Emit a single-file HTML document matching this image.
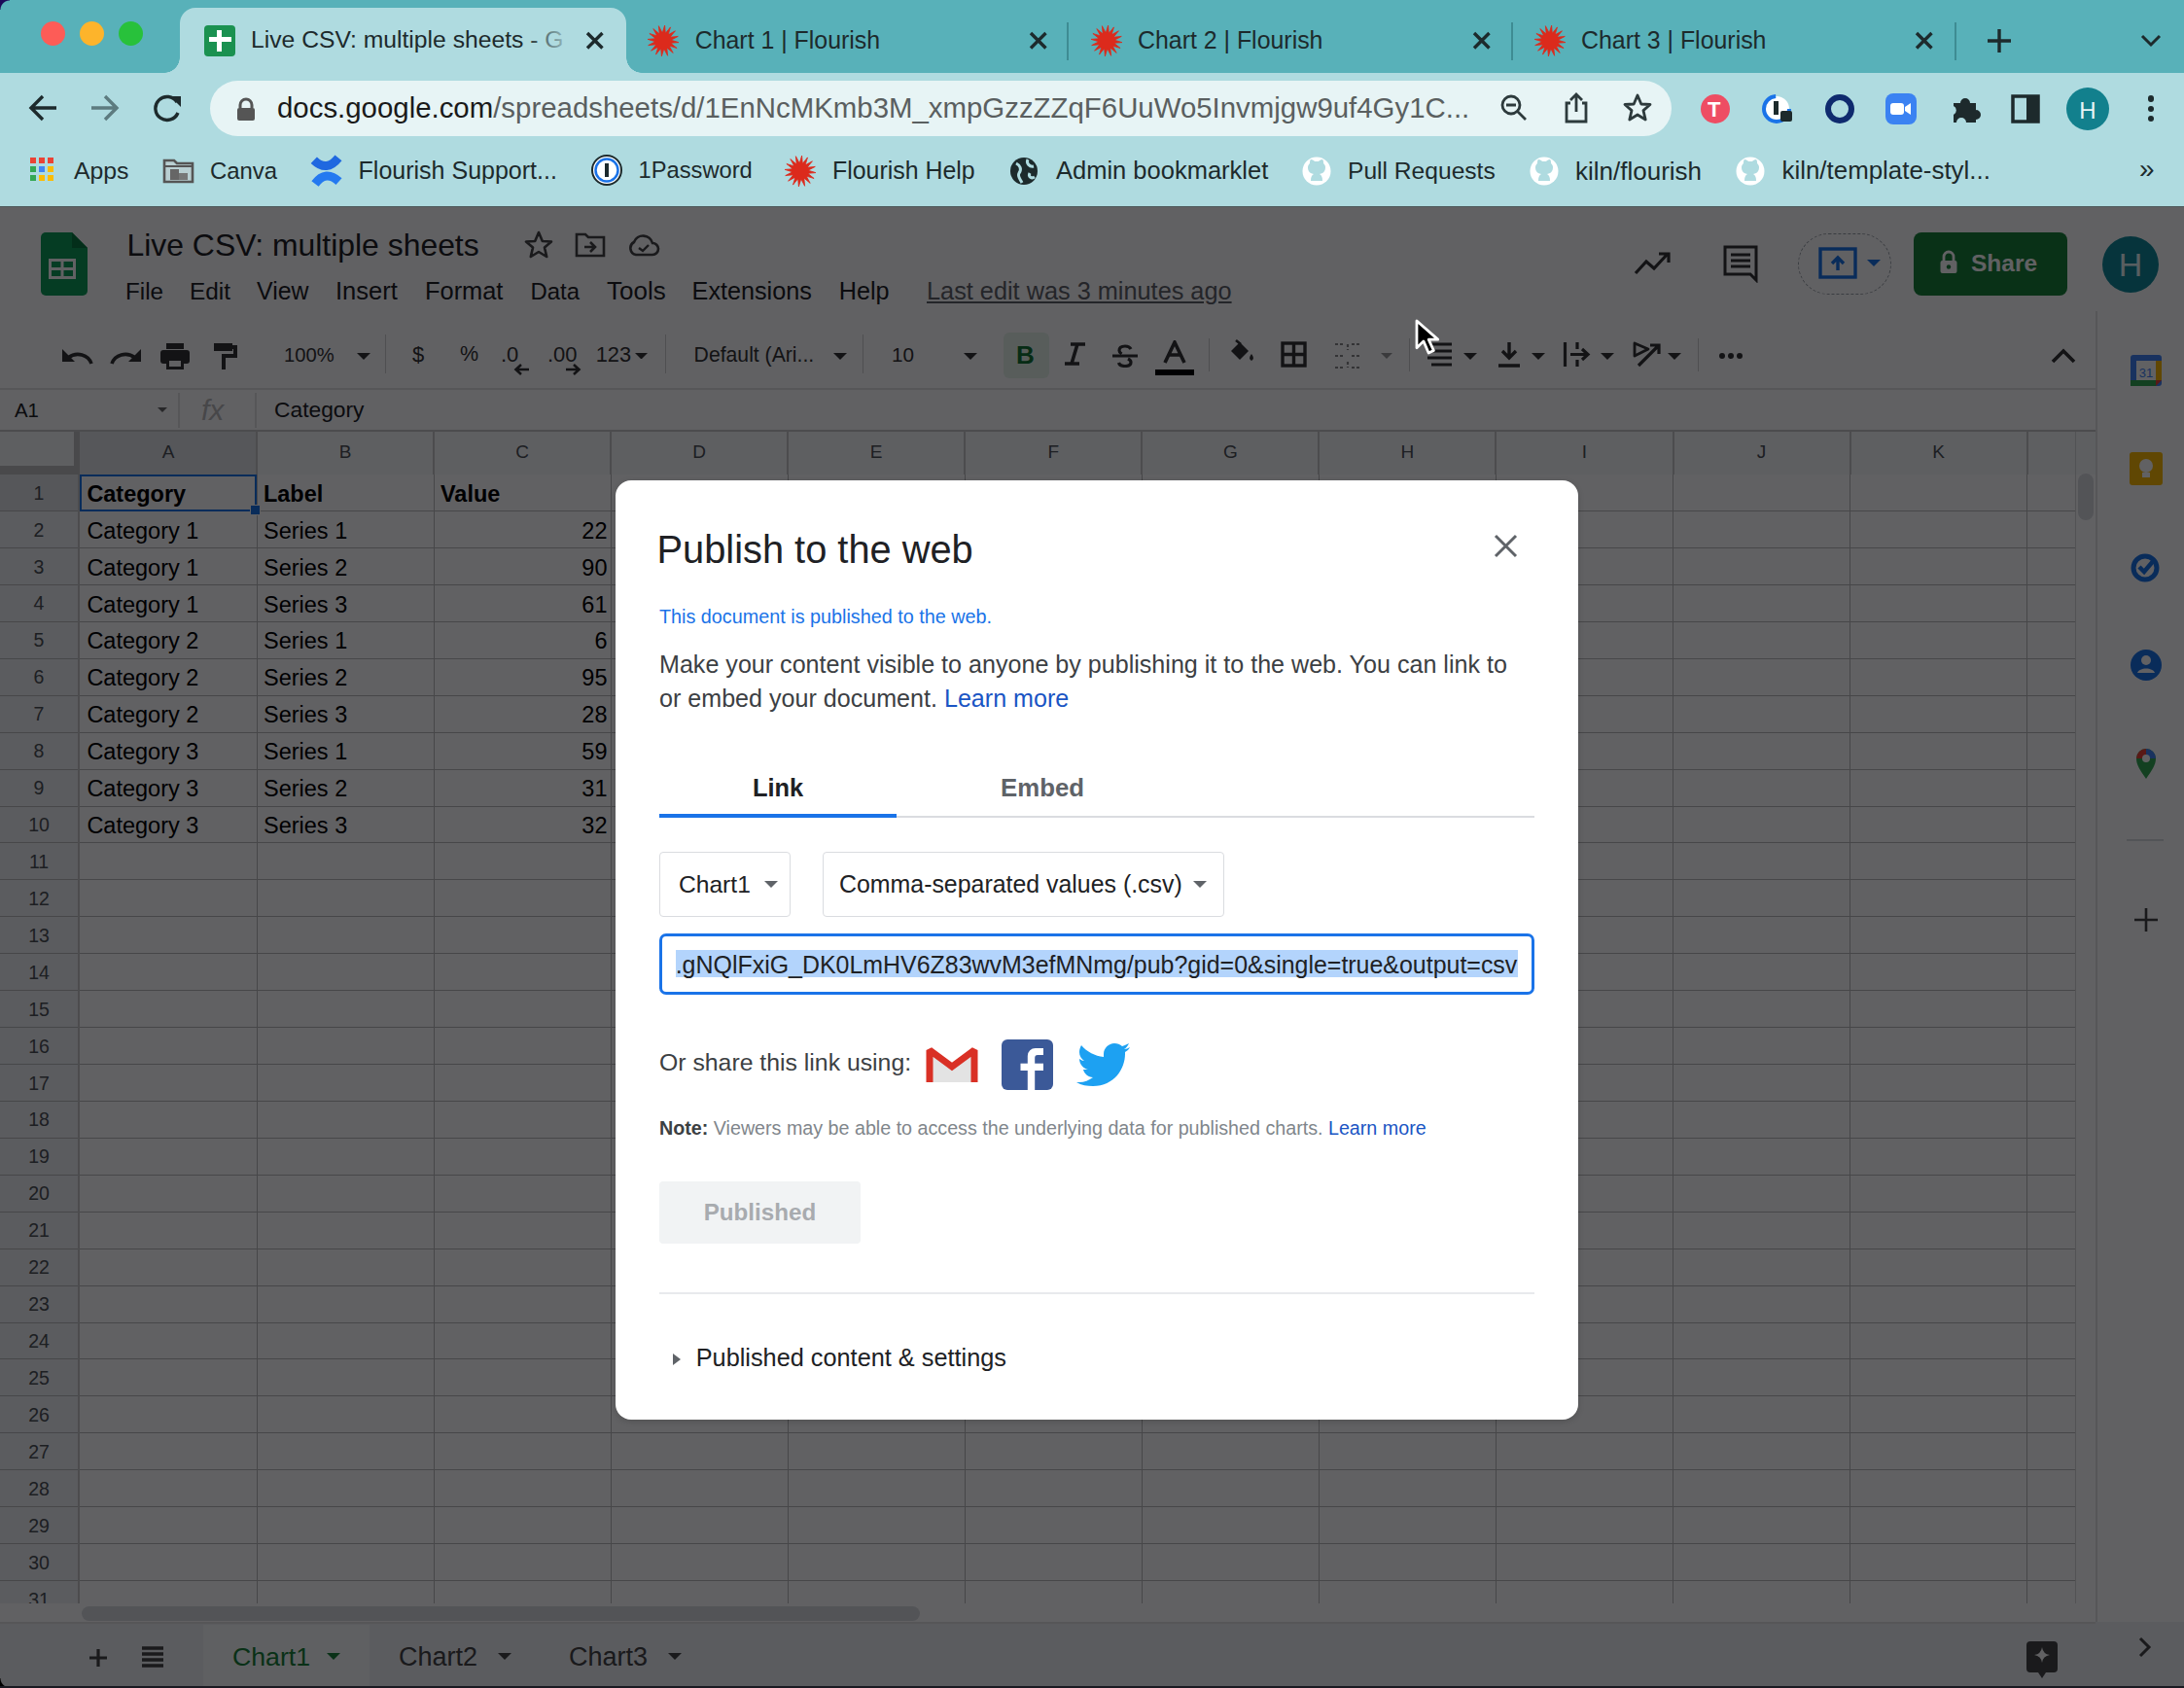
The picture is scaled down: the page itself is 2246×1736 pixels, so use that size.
<!DOCTYPE html><html><head><meta charset="utf-8"><style>
html,body{margin:0;padding:0;}
body{width:2246px;height:1736px;position:relative;overflow:hidden;background:#58b1b9;font-family:"Liberation Sans", sans-serif;}
.t{position:absolute;white-space:nowrap;line-height:1;}
.r{position:absolute;}
</style></head><body>
<div class="r" style="left:0.0px;top:75.0px;width:2246.0px;height:138.0px;background:#afdbe0;"></div>
<div class="r" style="left:0.0px;top:212.0px;width:2246.0px;height:1.0px;background:#4d5a5c;"></div>
<div class="r" style="left:0;top:0;width:10px;height:10px;background:radial-gradient(circle at 100% 100%, transparent 9px, #1c0a5a 10px)"></div>
<div class="r" style="left:41.5px;top:22px;width:25px;height:25px;border-radius:50%;background:#fd5c57"></div>
<div class="r" style="left:81.5px;top:22px;width:25px;height:25px;border-radius:50%;background:#fdb42b"></div>
<div class="r" style="left:121.5px;top:22px;width:25px;height:25px;border-radius:50%;background:#28c13b"></div>
<div class="r" style="left:185px;top:8px;width:459px;height:70px;background:#afdbe0;border-radius:16px 16px 0 0"></div>
<div class="r" style="left:169px;top:59px;width:16px;height:16px;background:radial-gradient(circle at 0 0, transparent 15.5px, #afdbe0 16px)"></div>
<div class="r" style="left:644px;top:59px;width:16px;height:16px;background:radial-gradient(circle at 100% 0, transparent 15.5px, #afdbe0 16px)"></div>
<div class="r" style="left:210px;top:26px;width:32px;height:32px;background:#1a9150;border-radius:4px"></div>
<div class="r" style="left:223.0px;top:31.0px;width:5.0px;height:22.0px;background:#fff;"></div>
<div class="r" style="left:215.0px;top:38.0px;width:23.0px;height:5.0px;background:#fff;"></div>
<div class="t" style="left:258.0px;top:29.1px;font-size:24.70px;color:#1d2a2c;font-weight:400;">Live CSV: multiple sheets - G</div>
<div class="r" style="left:540px;top:20px;width:60px;height:40px;background:linear-gradient(90deg, rgba(175,219,224,0), #afdbe0 85%)"></div>
<svg class="r" style="left:602.2px;top:32.2px;" width="19.5" height="19.5" viewBox="0 0 19.5 19.5"><path d="M2 2L17.5 17.5M17.5 2L2 17.5" stroke="#1d2a2c" stroke-width="3.4" stroke-linecap="butt"/></svg>
<svg class="r" style="left:664.0px;top:24.0px;" width="36" height="36" viewBox="0 0 36 36"><polygon points="33.9,19.6 25.7,20.3 32.1,25.5 24.2,23.1 28.2,30.4 21.8,25.1 22.6,33.3 18.8,26.0 16.4,33.9 15.7,25.7 10.5,32.1 12.9,24.2 5.6,28.2 10.9,21.8 2.7,22.6 10.0,18.8 2.1,16.4 10.3,15.7 3.9,10.5 11.8,12.9 7.8,5.6 14.2,10.9 13.4,2.7 17.2,10.0 19.6,2.1 20.3,10.3 25.5,3.9 23.1,11.8 30.4,7.8 25.1,14.2 33.3,13.4 26.0,17.2" fill="#dc2a1c" stroke="#dc2a1c" stroke-width="0.8" stroke-linejoin="round"/><circle cx="18" cy="18" r="8.8" fill="#dc2a1c"/></svg>
<div class="t" style="left:714.7px;top:28.9px;font-size:24.90px;color:#1d2a2c;font-weight:400;">Chart 1 | Flourish</div>
<svg class="r" style="left:1058.2px;top:32.2px;" width="19.5" height="19.5" viewBox="0 0 19.5 19.5"><path d="M2 2L17.5 17.5M17.5 2L2 17.5" stroke="#1d2a2c" stroke-width="3.4" stroke-linecap="butt"/></svg>
<svg class="r" style="left:1120.0px;top:24.0px;" width="36" height="36" viewBox="0 0 36 36"><polygon points="33.9,19.6 25.7,20.3 32.1,25.5 24.2,23.1 28.2,30.4 21.8,25.1 22.6,33.3 18.8,26.0 16.4,33.9 15.7,25.7 10.5,32.1 12.9,24.2 5.6,28.2 10.9,21.8 2.7,22.6 10.0,18.8 2.1,16.4 10.3,15.7 3.9,10.5 11.8,12.9 7.8,5.6 14.2,10.9 13.4,2.7 17.2,10.0 19.6,2.1 20.3,10.3 25.5,3.9 23.1,11.8 30.4,7.8 25.1,14.2 33.3,13.4 26.0,17.2" fill="#dc2a1c" stroke="#dc2a1c" stroke-width="0.8" stroke-linejoin="round"/><circle cx="18" cy="18" r="8.8" fill="#dc2a1c"/></svg>
<div class="t" style="left:1170.0px;top:28.9px;font-size:24.90px;color:#1d2a2c;font-weight:400;">Chart 2 | Flourish</div>
<svg class="r" style="left:1514.2px;top:32.2px;" width="19.5" height="19.5" viewBox="0 0 19.5 19.5"><path d="M2 2L17.5 17.5M17.5 2L2 17.5" stroke="#1d2a2c" stroke-width="3.4" stroke-linecap="butt"/></svg>
<svg class="r" style="left:1575.5px;top:24.0px;" width="36" height="36" viewBox="0 0 36 36"><polygon points="33.9,19.6 25.7,20.3 32.1,25.5 24.2,23.1 28.2,30.4 21.8,25.1 22.6,33.3 18.8,26.0 16.4,33.9 15.7,25.7 10.5,32.1 12.9,24.2 5.6,28.2 10.9,21.8 2.7,22.6 10.0,18.8 2.1,16.4 10.3,15.7 3.9,10.5 11.8,12.9 7.8,5.6 14.2,10.9 13.4,2.7 17.2,10.0 19.6,2.1 20.3,10.3 25.5,3.9 23.1,11.8 30.4,7.8 25.1,14.2 33.3,13.4 26.0,17.2" fill="#dc2a1c" stroke="#dc2a1c" stroke-width="0.8" stroke-linejoin="round"/><circle cx="18" cy="18" r="8.8" fill="#dc2a1c"/></svg>
<div class="t" style="left:1626.0px;top:28.9px;font-size:24.90px;color:#1d2a2c;font-weight:400;">Chart 3 | Flourish</div>
<svg class="r" style="left:1969.2px;top:32.2px;" width="19.5" height="19.5" viewBox="0 0 19.5 19.5"><path d="M2 2L17.5 17.5M17.5 2L2 17.5" stroke="#1d2a2c" stroke-width="3.4" stroke-linecap="butt"/></svg>
<div class="r" style="left:1097.0px;top:23.0px;width:2.0px;height:39.0px;background:#3e8c93;"></div>
<div class="r" style="left:1554.0px;top:23.0px;width:2.0px;height:39.0px;background:#3e8c93;"></div>
<div class="r" style="left:2010.0px;top:23.0px;width:2.0px;height:39.0px;background:#3e8c93;"></div>
<svg class="r" style="left:2042.0px;top:28.0px;" width="28" height="28" viewBox="0 0 28 28"><path d="M14 2V26M2 14H26" stroke="#1d2a2c" stroke-width="3.4"/></svg>
<svg class="r" style="left:2200.0px;top:34.0px;" width="24" height="16" viewBox="0 0 24 16"><path d="M3 3L12 12L21 3" stroke="#1d2a2c" stroke-width="3" fill="none"/></svg>
<svg class="r" style="left:28.0px;top:96.0px;" width="32" height="30" viewBox="0 0 32 30"><path d="M30 15H5M16 3L4 15L16 27" stroke="#1d2a2c" stroke-width="3.4" fill="none"/></svg>
<svg class="r" style="left:92.0px;top:96.0px;" width="32" height="30" viewBox="0 0 32 30"><path d="M2 15H27M16 3L28 15L16 27" stroke="#5d7b7f" stroke-width="3.4" fill="none"/></svg>
<svg class="r" style="left:155.0px;top:96.0px;" width="34" height="30" viewBox="0 0 34 30"><path d="M27 9A12 12 0 1 0 28 20" stroke="#1d2a2c" stroke-width="3.4" fill="none"/><path d="M20 3H31V14Z" fill="#1d2a2c"/></svg>
<div class="r" style="left:216px;top:83px;width:1503px;height:57px;border-radius:28.5px;background:#e7f4f5"></div>
<svg class="r" style="left:242.0px;top:100.0px;" width="22" height="26" viewBox="0 0 22 26"><path d="M5 11V8A6 6 0 0 1 17 8V11" stroke="#555" stroke-width="3" fill="none"/><rect x="2" y="11" width="18" height="13" rx="2" fill="#555"/></svg>
<div class="t" style="left:285.0px;top:96.1px;font-size:29.40px;color:#5a5f60;font-weight:400;"><span style="color:#1a1a1a">docs.google.com</span>/spreadsheets/d/1EnNcMKmb3M_xmpGzzZZqF6UuWo5Invmjgw9uf4Gy1C...</div>
<svg class="r" style="left:1543.0px;top:97.0px;" width="28" height="28" viewBox="0 0 28 28"><circle cx="11" cy="11" r="9" stroke="#2d3a3c" stroke-width="2.8" fill="none"/><path d="M17.5 17.5L26 26M6 11H16" stroke="#2d3a3c" stroke-width="2.8"/></svg>
<svg class="r" style="left:1607.0px;top:94.0px;" width="28" height="34" viewBox="0 0 28 34"><path d="M8 12H4V31H24V12H20M14 21V3M8 9L14 3L20 9" stroke="#2d3a3c" stroke-width="2.8" fill="none"/></svg>
<svg class="r" style="left:1668.0px;top:95.0px;" width="32" height="32" viewBox="0 0 32 32"><polygon points="16,3 19.8,12 29,12.5 22,18.6 24.2,28 16,23 7.8,28 10,18.6 3,12.5 12.2,12" stroke="#2d3a3c" stroke-width="2.8" fill="none" stroke-linejoin="round"/></svg>
<div class="r" style="left:1749px;top:97px;width:30px;height:30px;border-radius:50%;background:#ee4d63"></div>
<div class="t" style="left:1756.0px;top:102.4px;font-size:22.00px;color:#fff;font-weight:700;">T</div>
<svg class="r" style="left:1811.0px;top:96.0px;" width="34" height="34" viewBox="0 0 34 34"><circle cx="16" cy="16" r="13" stroke="#1a73e8" stroke-width="4" fill="#fff" stroke-dasharray="60 30"/><rect x="13" y="8" width="5" height="14" fill="#1d2a2c"/><rect x="20" y="18" width="12" height="11" rx="2" fill="#1d2a2c"/></svg>
<svg class="r" style="left:1876.0px;top:96.0px;" width="32" height="32" viewBox="0 0 32 32"><circle cx="16" cy="16" r="12" stroke="#0f2a6e" stroke-width="6" fill="none"/></svg>
<div class="r" style="left:1939px;top:96px;width:32px;height:32px;border-radius:8px;background:#3b82f2"></div>
<svg class="r" style="left:1943.0px;top:104.0px;" width="24" height="16" viewBox="0 0 24 16"><rect x="1" y="2" width="14" height="12" rx="3" fill="#fff"/><path d="M16 6L22 2V14L16 10Z" fill="#fff"/></svg>
<svg class="r" style="left:2006.0px;top:95.0px;" width="34" height="32" viewBox="0 0 34 32"><path d="M3 11H10A5 5 0 0 1 20 11H26V18A5 5 0 0 1 26 28V31H16A5 5 0 0 0 6 31H3V23A5 5 0 0 0 3 14Z" fill="#1d2a2c"/></svg>
<svg class="r" style="left:2068.0px;top:97.0px;" width="30" height="30" viewBox="0 0 30 30"><rect x="2" y="2" width="26" height="26" stroke="#1d2a2c" stroke-width="3.5" fill="none"/><rect x="16" y="2" width="12" height="26" fill="#1d2a2c"/></svg>
<div class="r" style="left:2125px;top:90px;width:44px;height:44px;border-radius:50%;background:#12808d"></div>
<div class="t" style="left:1847.0px;width:600px;text-align:center;top:101.7px;font-size:24.00px;color:#e6f4f5;font-weight:400;">H</div>
<div class="r" style="left:2208.7px;top:98.3px;width:6.4px;height:6.4px;border-radius:50%;background:#1d2a2c"></div>
<div class="r" style="left:2208.7px;top:108.6px;width:6.4px;height:6.4px;border-radius:50%;background:#1d2a2c"></div>
<div class="r" style="left:2208.7px;top:118.8px;width:6.4px;height:6.4px;border-radius:50%;background:#1d2a2c"></div>
<svg class="r" style="left:29.0px;top:160.0px;" width="28" height="28" viewBox="0 0 28 28"><rect x="2" y="2" width="6" height="6" fill="#ea4335"/><rect x="11" y="2" width="6" height="6" fill="#ea4335"/><rect x="20" y="2" width="6" height="6" fill="#ea4335"/><rect x="2" y="11" width="6" height="6" fill="#34a853"/><rect x="11" y="11" width="6" height="6" fill="#4285f4"/><rect x="20" y="11" width="6" height="6" fill="#fbbc04"/><rect x="2" y="20" width="6" height="6" fill="#34a853"/><rect x="11" y="20" width="6" height="6" fill="#fbbc04"/><rect x="20" y="20" width="6" height="6" fill="#fbbc04"/></svg>
<div class="t" style="left:76.0px;top:163.5px;font-size:24.80px;color:#1d2a2c;font-weight:400;">Apps</div>
<svg class="r" style="left:167.0px;top:162.0px;" width="34" height="27" viewBox="0 0 34 27"><path d="M2 3H12L15 6H31V25H2Z" stroke="#555" stroke-width="2.6" fill="#b9cfd2"/><path d="M2 9H31" stroke="#555" stroke-width="2"/><rect x="8" y="12" width="9" height="11" fill="#666"/><rect x="17" y="16" width="9" height="7" fill="#777"/></svg>
<div class="t" style="left:216.0px;top:164.3px;font-size:23.90px;color:#1d2a2c;font-weight:400;">Canva</div>
<svg class="r" style="left:310.0px;top:150.0px;" width="50" height="50" viewBox="0 0 50 50"><path d="M12.8 14.7Q26 27.5 38 12.4" stroke="#1f68e0" stroke-width="9" fill="none"/><path d="M14 39Q25 24.2 38.5 36.6" stroke="#2479f0" stroke-width="9" fill="none"/></svg>
<div class="t" style="left:368.6px;top:163.3px;font-size:25.00px;color:#1d2a2c;font-weight:400;">Flourish Support...</div>
<svg class="r" style="left:607.0px;top:158.0px;" width="34" height="34" viewBox="0 0 34 34"><circle cx="17" cy="17" r="15" fill="#fff" stroke="#1d2a2c" stroke-width="2"/><circle cx="17" cy="17" r="11.5" stroke="#1a73e8" stroke-width="2.5" fill="none"/><rect x="15" y="10" width="4" height="14" fill="#1d2a2c"/></svg>
<div class="t" style="left:656.6px;top:164.4px;font-size:23.70px;color:#1d2a2c;font-weight:400;">1Password</div>
<svg class="r" style="left:805.0px;top:158.0px;" width="36" height="36" viewBox="0 0 36 36"><polygon points="33.9,19.6 25.7,20.3 32.1,25.5 24.2,23.1 28.2,30.4 21.8,25.1 22.6,33.3 18.8,26.0 16.4,33.9 15.7,25.7 10.5,32.1 12.9,24.2 5.6,28.2 10.9,21.8 2.7,22.6 10.0,18.8 2.1,16.4 10.3,15.7 3.9,10.5 11.8,12.9 7.8,5.6 14.2,10.9 13.4,2.7 17.2,10.0 19.6,2.1 20.3,10.3 25.5,3.9 23.1,11.8 30.4,7.8 25.1,14.2 33.3,13.4 26.0,17.2" fill="#dc2a1c" stroke="#dc2a1c" stroke-width="0.8" stroke-linejoin="round"/><circle cx="18" cy="18" r="8.8" fill="#dc2a1c"/></svg>
<div class="t" style="left:856.0px;top:163.4px;font-size:24.90px;color:#1d2a2c;font-weight:400;">Flourish Help</div>
<svg class="r" style="left:1037.0px;top:160.0px;" width="32" height="32" viewBox="0 0 32 32"><circle cx="16" cy="16" r="14" fill="#1d2a2c"/><path d="M8 8C12 10 14 14 11 18C9 21 12 24 14 28M20 4C18 8 22 12 26 11M22 18C20 22 24 24 27 22" stroke="#afdbe0" stroke-width="3" fill="none"/></svg>
<div class="t" style="left:1086.0px;top:162.9px;font-size:25.50px;color:#1d2a2c;font-weight:400;">Admin bookmarklet</div>
<svg class="r" style="left:1338.0px;top:160.0px;" width="32" height="32" viewBox="0 0 32 32"><circle cx="16" cy="16" r="14.5" fill="#fff"/><path d="M10 26C10 22 11 20 13 19C8 18 7 15 7 12C7 10 8 9 9 8C9 6 9 5 10 4C12 4 13 5 14 6C15 6 17 6 18 6C19 5 20 4 22 4C23 5 23 6 23 8C24 9 25 10 25 12C25 15 24 18 19 19C21 20 22 22 22 26Z" fill="#afdbe0"/></svg>
<div class="t" style="left:1386.0px;top:163.7px;font-size:24.60px;color:#1d2a2c;font-weight:400;">Pull Requests</div>
<svg class="r" style="left:1572.0px;top:160.0px;" width="32" height="32" viewBox="0 0 32 32"><circle cx="16" cy="16" r="14.5" fill="#fff"/><path d="M10 26C10 22 11 20 13 19C8 18 7 15 7 12C7 10 8 9 9 8C9 6 9 5 10 4C12 4 13 5 14 6C15 6 17 6 18 6C19 5 20 4 22 4C23 5 23 6 23 8C24 9 25 10 25 12C25 15 24 18 19 19C21 20 22 22 22 26Z" fill="#afdbe0"/></svg>
<div class="t" style="left:1620.0px;top:162.5px;font-size:26.00px;color:#1d2a2c;font-weight:400;">kiln/flourish</div>
<svg class="r" style="left:1784.0px;top:160.0px;" width="32" height="32" viewBox="0 0 32 32"><circle cx="16" cy="16" r="14.5" fill="#fff"/><path d="M10 26C10 22 11 20 13 19C8 18 7 15 7 12C7 10 8 9 9 8C9 6 9 5 10 4C12 4 13 5 14 6C15 6 17 6 18 6C19 5 20 4 22 4C23 5 23 6 23 8C24 9 25 10 25 12C25 15 24 18 19 19C21 20 22 22 22 26Z" fill="#afdbe0"/></svg>
<div class="t" style="left:1832.5px;top:162.6px;font-size:25.90px;color:#1d2a2c;font-weight:400;">kiln/template-styl...</div>
<div class="t" style="left:2200.0px;top:159.8px;font-size:28.00px;color:#1d2a2c;font-weight:400;">»</div>
<div class="r" style="left:0;top:213px;width:2246px;height:1523px;background:#fff;overflow:hidden">
<div class="r" style="left:0;top:-213px;width:2246px;height:1736px">
<svg class="r" style="left:42.0px;top:239.0px;" width="48" height="65" viewBox="0 0 48 65"><path d="M0 5A5 5 0 0 1 5 0H32L48 16V60A5 5 0 0 1 43 65H5A5 5 0 0 1 0 60Z" fill="#0f9d58"/><path d="M32 0V16H48Z" fill="#0a7a40"/><rect x="8" y="27" width="28" height="21" fill="#fff"/><rect x="11" y="30" width="9.5" height="6" fill="#0f9d58"/><rect x="23.5" y="30" width="9.5" height="6" fill="#0f9d58"/><rect x="11" y="39" width="9.5" height="6" fill="#0f9d58"/><rect x="23.5" y="39" width="9.5" height="6" fill="#0f9d58"/></svg>
<div class="t" style="left:130.5px;top:237.0px;font-size:31.90px;color:#202124;font-weight:400;">Live CSV: multiple sheets</div>
<svg class="r" style="left:538.0px;top:237.0px;" width="32" height="30" viewBox="0 0 32 30"><polygon points="16,2 19.8,11 29,11.5 22,17.6 24.2,27 16,22 7.8,27 10,17.6 3,11.5 12.2,11" stroke="#444" stroke-width="2.6" fill="none" stroke-linejoin="round"/></svg>
<svg class="r" style="left:591.0px;top:238.0px;" width="32" height="28" viewBox="0 0 32 28"><path d="M2 3H11L14 6H30V25H2Z" stroke="#444" stroke-width="2.6" fill="none"/><path d="M10 16H20M16 11L21 16L16 21" stroke="#444" stroke-width="2.6" fill="none"/></svg>
<svg class="r" style="left:645.0px;top:238.0px;" width="34" height="28" viewBox="0 0 34 28"><path d="M9 24H26A6 6 0 0 0 26 12A10 10 0 0 0 7 11A7 7 0 0 0 9 24Z" stroke="#444" stroke-width="2.6" fill="none"/><path d="M12 17L16 20L22 14" stroke="#444" stroke-width="2.4" fill="none"/></svg>
<div class="t" style="left:129.0px;top:287.9px;font-size:24.20px;color:#202124;font-weight:400;">File</div>
<div class="t" style="left:195.0px;top:287.7px;font-size:24.40px;color:#202124;font-weight:400;">Edit</div>
<div class="t" style="left:264.0px;top:287.3px;font-size:24.90px;color:#202124;font-weight:400;">View</div>
<div class="t" style="left:345.0px;top:286.8px;font-size:25.50px;color:#202124;font-weight:400;">Insert</div>
<div class="t" style="left:437.0px;top:286.9px;font-size:25.40px;color:#202124;font-weight:400;">Format</div>
<div class="t" style="left:545.5px;top:288.2px;font-size:23.90px;color:#202124;font-weight:400;">Data</div>
<div class="t" style="left:624.0px;top:286.4px;font-size:26.00px;color:#202124;font-weight:400;">Tools</div>
<div class="t" style="left:711.6px;top:287.1px;font-size:25.20px;color:#202124;font-weight:400;">Extensions</div>
<div class="t" style="left:862.8px;top:287.1px;font-size:25.20px;color:#202124;font-weight:400;">Help</div>
<div class="t" style="left:953.0px;top:287.0px;font-size:25.30px;color:#5f6368;font-weight:400;text-decoration:underline;">Last edit was 3 minutes ago</div>
<svg class="r" style="left:1680.0px;top:256.0px;" width="40" height="28" viewBox="0 0 40 28"><path d="M2 25L13 13L21 20L35 5M26 5H36V14" stroke="#333" stroke-width="3.2" fill="none"/></svg>
<svg class="r" style="left:1771.0px;top:251.0px;" width="40" height="40" viewBox="0 0 40 40"><path d="M2 2H36V30L30 30L38 38V2" stroke="#333" stroke-width="0" fill="none"/><path d="M3 3H35V37L29 31H3Z" stroke="#333" stroke-width="3" fill="none"/><path d="M9 11H29M9 17H29M9 23H29" stroke="#333" stroke-width="3"/></svg>
<div class="r" style="left:1849px;top:240px;width:96px;height:63px;border-radius:32px;border:1.5px dashed #9aa0a6;box-sizing:border-box"></div>
<svg class="r" style="left:1869.0px;top:253.0px;" width="70" height="36" viewBox="0 0 70 36"><rect x="3" y="3" width="36" height="29" stroke="#1a73e8" stroke-width="3.4" fill="none"/><path d="M21 25V12M15 18L21 12L27 18" stroke="#1a73e8" stroke-width="3.4" fill="none"/><path d="M51 14H65L58 21Z" fill="#1a73e8"/></svg>
<div class="r" style="left:1968px;top:239px;width:158px;height:65px;border-radius:8px;background:#188038"></div>
<svg class="r" style="left:1994.0px;top:257.0px;" width="20" height="26" viewBox="0 0 20 26"><path d="M5 11V7A5 5 0 0 1 15 7V11" stroke="#fff" stroke-width="2.8" fill="none"/><rect x="1.5" y="11" width="17" height="13" rx="2" fill="#fff"/><circle cx="10" cy="17.5" r="2.2" fill="#188038"/></svg>
<div class="t" style="left:2027.0px;top:259.3px;font-size:24.50px;color:#fff;font-weight:700;">Share</div>
<div class="r" style="left:2162px;top:243px;width:58px;height:58px;border-radius:50%;background:#108a99"></div>
<div class="t" style="left:1891.0px;width:600px;text-align:center;top:255.2px;font-size:34.00px;color:#e6f6f8;font-weight:400;">H</div>
<svg class="r" style="left:62.0px;top:356.0px;" width="34" height="20" viewBox="0 0 34 20"><path d="M32 18C29 9 17 5 8 12" stroke="#333" stroke-width="3.6" fill="none"/><path d="M2 3V16H15Z" fill="#333"/></svg>
<svg class="r" style="left:113.0px;top:356.0px;" width="34" height="20" viewBox="0 0 34 20"><path d="M2 18C5 9 17 5 26 12" stroke="#333" stroke-width="3.6" fill="none"/><path d="M32 3V16H19Z" fill="#333"/></svg>
<svg class="r" style="left:164.0px;top:352.0px;" width="32" height="28" viewBox="0 0 32 28"><rect x="7" y="1" width="18" height="6" fill="#333"/><rect x="1" y="8" width="30" height="14" rx="3" fill="#333"/><rect x="8.5" y="17.5" width="15" height="9" fill="#fff" stroke="#333" stroke-width="3"/></svg>
<svg class="r" style="left:219.0px;top:352.0px;" width="26" height="28" viewBox="0 0 26 28"><rect x="1" y="1" width="19" height="8" fill="#333"/><path d="M20 5H23V14H11V28" stroke="#333" stroke-width="4" fill="none"/></svg>
<div class="t" style="left:292.0px;top:355.2px;font-size:20.20px;color:#333;font-weight:400;">100%</div>
<svg class="r" style="left:367.0px;top:362.5px;" width="14" height="7.0" viewBox="0 0 14 7.0"><path d="M0 0H14L7.0 7.0Z" fill="#333"/></svg>
<div class="r" style="left:396.0px;top:344.0px;width:1.0px;height:40.0px;background:#d0d0d0;"></div>
<div class="t" style="left:424.0px;top:354.4px;font-size:22.00px;color:#333;font-weight:400;">$</div>
<div class="t" style="left:473.0px;top:354.1px;font-size:21.50px;color:#333;font-weight:400;">%</div>
<div class="t" style="left:515.0px;top:353.7px;font-size:22.00px;color:#333;font-weight:400;">.0</div>
<svg class="r" style="left:528.0px;top:374.0px;" width="17" height="12" viewBox="0 0 17 12"><path d="M16 6H3M8 1L2.5 6L8 11" stroke="#333" stroke-width="2.6" fill="none"/></svg>
<div class="t" style="left:563.0px;top:353.7px;font-size:22.00px;color:#333;font-weight:400;">.00</div>
<svg class="r" style="left:581.0px;top:374.0px;" width="17" height="12" viewBox="0 0 17 12"><path d="M1 6H14M9 1L14.5 6L9 11" stroke="#333" stroke-width="2.6" fill="none"/></svg>
<div class="t" style="left:612.7px;top:353.8px;font-size:21.80px;color:#333;font-weight:400;">123</div>
<svg class="r" style="left:652.5px;top:362.8px;" width="13" height="6.5" viewBox="0 0 13 6.5"><path d="M0 0H13L6.5 6.5Z" fill="#333"/></svg>
<div class="r" style="left:684.0px;top:344.0px;width:1.0px;height:40.0px;background:#d0d0d0;"></div>
<div class="t" style="left:713.6px;top:354.4px;font-size:21.20px;color:#333;font-weight:400;">Default (Ari...</div>
<svg class="r" style="left:857.0px;top:362.5px;" width="14" height="7.0" viewBox="0 0 14 7.0"><path d="M0 0H14L7.0 7.0Z" fill="#333"/></svg>
<div class="r" style="left:887.0px;top:344.0px;width:1.0px;height:40.0px;background:#d0d0d0;"></div>
<div class="t" style="left:917.0px;top:354.8px;font-size:20.70px;color:#333;font-weight:400;">10</div>
<svg class="r" style="left:991.0px;top:362.5px;" width="14" height="7.0" viewBox="0 0 14 7.0"><path d="M0 0H14L7.0 7.0Z" fill="#333"/></svg>
<div class="r" style="left:1032px;top:342px;width:47px;height:47px;border-radius:6px;background:#e6f4ea"></div>
<div class="t" style="left:1045.0px;top:352.0px;font-size:26.00px;color:#137333;font-weight:700;">B</div>
<svg class="r" style="left:1092.0px;top:352.0px;" width="26" height="24" viewBox="0 0 26 24"><path d="M9 2H24M3 22H18M16 2L10 22" stroke="#333" stroke-width="3.6" fill="none"/></svg>
<svg class="r" style="left:1143.0px;top:354.0px;" width="28" height="24" viewBox="0 0 28 24"><path d="M1 12H27" stroke="#333" stroke-width="3"/><path d="M20 5C19 3 17 2 14 2C10 2 8 4 8 6.5C8 8 9 9 10.5 10M17 15C19 16 20 17 20 18.5C20 21 17.5 22.5 14 22.5C10 22.5 8 21 7.5 19" stroke="#333" stroke-width="3.2" fill="none"/></svg>
<svg class="r" style="left:1196.0px;top:350.0px;" width="24" height="24" viewBox="0 0 24 24"><path d="M2 23L12 2L22 23M6 15H18" stroke="#333" stroke-width="3.6" fill="none"/></svg>
<div class="r" style="left:1188.0px;top:379.6px;width:39.5px;height:6.7px;background:#000;"></div>
<div class="r" style="left:1243.0px;top:348.0px;width:1.0px;height:34.0px;background:#d0d0d0;"></div>
<svg class="r" style="left:1263.0px;top:348.0px;" width="28" height="26" viewBox="0 0 28 26"><path d="M3 13L12 4L21 13L12 22Z" fill="#333"/><path d="M3 13H21" stroke="#fff" stroke-width="0"/><path d="M8 2L13 6" stroke="#333" stroke-width="2.6"/><path d="M24 16C26 19 27 21 24 23C21 21 22 19 24 16Z" fill="#333"/></svg>
<svg class="r" style="left:1317.0px;top:351.0px;" width="27" height="27" viewBox="0 0 27 27"><rect x="2" y="2" width="23" height="23" stroke="#333" stroke-width="3.4" fill="none"/><path d="M13.5 2V25M2 13.5H25" stroke="#333" stroke-width="3.4"/></svg>
<svg class="r" style="left:1371.0px;top:352.0px;" width="31" height="28" viewBox="0 0 31 28"><path d="M2 2H11M19 2H29M2 26H11M19 26H29M2 14H11M19 14H29M15 2V8M15 20V26" stroke="#8a8a8a" stroke-width="2.2" fill="none" stroke-dasharray="3 2"/></svg>
<svg class="r" style="left:1420.0px;top:363.0px;" width="12" height="6.0" viewBox="0 0 12 6.0"><path d="M0 0H12L6.0 6.0Z" fill="#9a9a9a"/></svg>
<div class="r" style="left:1449.0px;top:348.0px;width:1.0px;height:34.0px;background:#d0d0d0;"></div>
<svg class="r" style="left:1466.0px;top:352.0px;" width="28" height="26" viewBox="0 0 28 26"><path d="M2 2H27M6 9H27M2 16H27M6 23H27" stroke="#333" stroke-width="3.2"/></svg>
<svg class="r" style="left:1505.0px;top:362.5px;" width="14" height="7.0" viewBox="0 0 14 7.0"><path d="M0 0H14L7.0 7.0Z" fill="#333"/></svg>
<svg class="r" style="left:1540.0px;top:351.0px;" width="24" height="27" viewBox="0 0 24 27"><path d="M12 1V17M5 10L12 17L19 10M1 25H23" stroke="#333" stroke-width="3.4" fill="none"/></svg>
<svg class="r" style="left:1575.0px;top:362.5px;" width="14" height="7.0" viewBox="0 0 14 7.0"><path d="M0 0H14L7.0 7.0Z" fill="#333"/></svg>
<svg class="r" style="left:1607.0px;top:351.0px;" width="29" height="27" viewBox="0 0 29 27"><path d="M2.5 1V26M15 1V8M15 19V26M8 13.5H26M20 8L26 13.5L20 19" stroke="#333" stroke-width="3.2" fill="none"/></svg>
<svg class="r" style="left:1646.0px;top:362.5px;" width="14" height="7.0" viewBox="0 0 14 7.0"><path d="M0 0H14L7.0 7.0Z" fill="#333"/></svg>
<svg class="r" style="left:1678.0px;top:350.0px;" width="30" height="28" viewBox="0 0 30 28"><path d="M3 3L17 9L3 16Z" stroke="#333" stroke-width="2.8" fill="none" stroke-linejoin="round"/><path d="M7 26L27 6M19 5H28V14" stroke="#333" stroke-width="3.2" fill="none"/></svg>
<svg class="r" style="left:1715.0px;top:362.5px;" width="14" height="7.0" viewBox="0 0 14 7.0"><path d="M0 0H14L7.0 7.0Z" fill="#333"/></svg>
<div class="r" style="left:1746.0px;top:348.0px;width:1.0px;height:34.0px;background:#d0d0d0;"></div>
<div class="r" style="left:1768px;top:362.5px;width:6px;height:6px;border-radius:50%;background:#333"></div>
<div class="r" style="left:1777px;top:362.5px;width:6px;height:6px;border-radius:50%;background:#333"></div>
<div class="r" style="left:1786px;top:362.5px;width:6px;height:6px;border-radius:50%;background:#333"></div>
<svg class="r" style="left:2108.0px;top:357.0px;" width="28" height="18" viewBox="0 0 28 18"><path d="M3 15L14 4L25 15" stroke="#333" stroke-width="3.6" fill="none"/></svg>
<div class="r" style="left:0.0px;top:399.0px;width:2155.0px;height:2.0px;background:#e1e3e1;"></div>
<div class="t" style="left:15.0px;top:411.7px;font-size:20.40px;color:#202124;font-weight:400;">A1</div>
<svg class="r" style="left:162.0px;top:418.5px;" width="10" height="5.0" viewBox="0 0 10 5.0"><path d="M0 0H10L5.0 5.0Z" fill="#666"/></svg>
<div class="r" style="left:183.0px;top:404.0px;width:2.0px;height:36.0px;background:#e1e3e1;"></div>
<div class="t" style="left:207.0px;top:406.6px;font-size:30.00px;color:#bbb;font-weight:400;"><i>fx</i></div>
<div class="r" style="left:262.0px;top:404.0px;width:2.0px;height:36.0px;background:#e1e3e1;"></div>
<div class="t" style="left:282.0px;top:409.7px;font-size:22.80px;color:#202124;font-weight:400;">Category</div>
<div class="r" style="left:0.0px;top:442.0px;width:2155.0px;height:2.0px;background:#c7c7c7;"></div>
<div class="r" style="left:0.0px;top:444.0px;width:2155.0px;height:43.6px;background:#f8f9fa;"></div>
<div class="r" style="left:82.0px;top:444.0px;width:182.1px;height:43.6px;background:#e3e5e8;"></div>
<div class="t" style="left:-127.0px;width:600px;text-align:center;top:454.9px;font-size:19.00px;color:#4d5156;font-weight:400;">A</div>
<div class="t" style="left:55.1px;width:600px;text-align:center;top:454.9px;font-size:19.00px;color:#4d5156;font-weight:400;">B</div>
<div class="t" style="left:237.1px;width:600px;text-align:center;top:454.9px;font-size:19.00px;color:#4d5156;font-weight:400;">C</div>
<div class="t" style="left:419.2px;width:600px;text-align:center;top:454.9px;font-size:19.00px;color:#4d5156;font-weight:400;">D</div>
<div class="t" style="left:601.2px;width:600px;text-align:center;top:454.9px;font-size:19.00px;color:#4d5156;font-weight:400;">E</div>
<div class="t" style="left:783.3px;width:600px;text-align:center;top:454.9px;font-size:19.00px;color:#4d5156;font-weight:400;">F</div>
<div class="t" style="left:965.3px;width:600px;text-align:center;top:454.9px;font-size:19.00px;color:#4d5156;font-weight:400;">G</div>
<div class="t" style="left:1147.4px;width:600px;text-align:center;top:454.9px;font-size:19.00px;color:#4d5156;font-weight:400;">H</div>
<div class="t" style="left:1329.4px;width:600px;text-align:center;top:454.9px;font-size:19.00px;color:#4d5156;font-weight:400;">I</div>
<div class="t" style="left:1511.5px;width:600px;text-align:center;top:454.9px;font-size:19.00px;color:#4d5156;font-weight:400;">J</div>
<div class="t" style="left:1693.5px;width:600px;text-align:center;top:454.9px;font-size:19.00px;color:#4d5156;font-weight:400;">K</div>
<div class="r" style="left:263.1px;top:444.0px;width:2.0px;height:43.6px;background:#c7c7c7;"></div>
<div class="r" style="left:445.1px;top:444.0px;width:2.0px;height:43.6px;background:#c7c7c7;"></div>
<div class="r" style="left:627.2px;top:444.0px;width:2.0px;height:43.6px;background:#c7c7c7;"></div>
<div class="r" style="left:809.2px;top:444.0px;width:2.0px;height:43.6px;background:#c7c7c7;"></div>
<div class="r" style="left:991.2px;top:444.0px;width:2.0px;height:43.6px;background:#c7c7c7;"></div>
<div class="r" style="left:1173.3px;top:444.0px;width:2.0px;height:43.6px;background:#c7c7c7;"></div>
<div class="r" style="left:1355.4px;top:444.0px;width:2.0px;height:43.6px;background:#c7c7c7;"></div>
<div class="r" style="left:1537.4px;top:444.0px;width:2.0px;height:43.6px;background:#c7c7c7;"></div>
<div class="r" style="left:1719.5px;top:444.0px;width:2.0px;height:43.6px;background:#c7c7c7;"></div>
<div class="r" style="left:1901.5px;top:444.0px;width:2.0px;height:43.6px;background:#c7c7c7;"></div>
<div class="r" style="left:2083.6px;top:444.0px;width:2.0px;height:43.6px;background:#c7c7c7;"></div>
<div class="r" style="left:0.0px;top:487.6px;width:82.0px;height:1161.4px;background:#eff1f3;"></div>
<div class="r" style="left:0.0px;top:487.6px;width:82.0px;height:37.9px;background:#e3e5e8;"></div>
<div class="r" style="left:0.0px;top:525.0px;width:2134.0px;height:1.0px;background:#bcbcbc;"></div>
<div class="r" style="left:0.0px;top:563.0px;width:2134.0px;height:1.0px;background:#bcbcbc;"></div>
<div class="r" style="left:0.0px;top:600.9px;width:2134.0px;height:1.0px;background:#bcbcbc;"></div>
<div class="r" style="left:0.0px;top:638.8px;width:2134.0px;height:1.0px;background:#bcbcbc;"></div>
<div class="r" style="left:0.0px;top:676.8px;width:2134.0px;height:1.0px;background:#bcbcbc;"></div>
<div class="r" style="left:0.0px;top:714.7px;width:2134.0px;height:1.0px;background:#bcbcbc;"></div>
<div class="r" style="left:0.0px;top:752.6px;width:2134.0px;height:1.0px;background:#bcbcbc;"></div>
<div class="r" style="left:0.0px;top:790.5px;width:2134.0px;height:1.0px;background:#bcbcbc;"></div>
<div class="r" style="left:0.0px;top:828.5px;width:2134.0px;height:1.0px;background:#bcbcbc;"></div>
<div class="r" style="left:0.0px;top:866.4px;width:2134.0px;height:1.0px;background:#bcbcbc;"></div>
<div class="r" style="left:0.0px;top:904.3px;width:2134.0px;height:1.0px;background:#bcbcbc;"></div>
<div class="r" style="left:0.0px;top:942.3px;width:2134.0px;height:1.0px;background:#bcbcbc;"></div>
<div class="r" style="left:0.0px;top:980.2px;width:2134.0px;height:1.0px;background:#bcbcbc;"></div>
<div class="r" style="left:0.0px;top:1018.1px;width:2134.0px;height:1.0px;background:#bcbcbc;"></div>
<div class="r" style="left:0.0px;top:1056.0px;width:2134.0px;height:1.0px;background:#bcbcbc;"></div>
<div class="r" style="left:0.0px;top:1094.0px;width:2134.0px;height:1.0px;background:#bcbcbc;"></div>
<div class="r" style="left:0.0px;top:1131.9px;width:2134.0px;height:1.0px;background:#bcbcbc;"></div>
<div class="r" style="left:0.0px;top:1169.8px;width:2134.0px;height:1.0px;background:#bcbcbc;"></div>
<div class="r" style="left:0.0px;top:1207.8px;width:2134.0px;height:1.0px;background:#bcbcbc;"></div>
<div class="r" style="left:0.0px;top:1245.7px;width:2134.0px;height:1.0px;background:#bcbcbc;"></div>
<div class="r" style="left:0.0px;top:1283.6px;width:2134.0px;height:1.0px;background:#bcbcbc;"></div>
<div class="r" style="left:0.0px;top:1321.6px;width:2134.0px;height:1.0px;background:#bcbcbc;"></div>
<div class="r" style="left:0.0px;top:1359.5px;width:2134.0px;height:1.0px;background:#bcbcbc;"></div>
<div class="r" style="left:0.0px;top:1397.4px;width:2134.0px;height:1.0px;background:#bcbcbc;"></div>
<div class="r" style="left:0.0px;top:1435.4px;width:2134.0px;height:1.0px;background:#bcbcbc;"></div>
<div class="r" style="left:0.0px;top:1473.3px;width:2134.0px;height:1.0px;background:#bcbcbc;"></div>
<div class="r" style="left:0.0px;top:1511.2px;width:2134.0px;height:1.0px;background:#bcbcbc;"></div>
<div class="r" style="left:0.0px;top:1549.1px;width:2134.0px;height:1.0px;background:#bcbcbc;"></div>
<div class="r" style="left:0.0px;top:1587.1px;width:2134.0px;height:1.0px;background:#bcbcbc;"></div>
<div class="r" style="left:0.0px;top:1625.0px;width:2134.0px;height:1.0px;background:#bcbcbc;"></div>
<div class="r" style="left:0.0px;top:1662.9px;width:2134.0px;height:1.0px;background:#bcbcbc;"></div>
<div class="r" style="left:263.6px;top:487.6px;width:1.0px;height:1161.4px;background:#bcbcbc;"></div>
<div class="r" style="left:445.6px;top:487.6px;width:1.0px;height:1161.4px;background:#bcbcbc;"></div>
<div class="r" style="left:627.7px;top:487.6px;width:1.0px;height:1161.4px;background:#bcbcbc;"></div>
<div class="r" style="left:809.7px;top:487.6px;width:1.0px;height:1161.4px;background:#bcbcbc;"></div>
<div class="r" style="left:991.8px;top:487.6px;width:1.0px;height:1161.4px;background:#bcbcbc;"></div>
<div class="r" style="left:1173.8px;top:487.6px;width:1.0px;height:1161.4px;background:#bcbcbc;"></div>
<div class="r" style="left:1355.9px;top:487.6px;width:1.0px;height:1161.4px;background:#bcbcbc;"></div>
<div class="r" style="left:1537.9px;top:487.6px;width:1.0px;height:1161.4px;background:#bcbcbc;"></div>
<div class="r" style="left:1720.0px;top:487.6px;width:1.0px;height:1161.4px;background:#bcbcbc;"></div>
<div class="r" style="left:1902.0px;top:487.6px;width:1.0px;height:1161.4px;background:#bcbcbc;"></div>
<div class="r" style="left:2084.1px;top:487.6px;width:1.0px;height:1161.4px;background:#bcbcbc;"></div>
<div class="r" style="left:80.0px;top:444.0px;width:2.0px;height:1205.0px;background:#c7c7c7;"></div>
<div class="r" style="left:76.0px;top:444.0px;width:6.0px;height:43.6px;background:#c0c0c0;"></div>
<div class="r" style="left:0.0px;top:479.0px;width:82.0px;height:8.6px;background:#c0c0c0;"></div>
<div class="t" style="left:-260.0px;width:600px;text-align:center;top:497.6px;font-size:19.50px;color:#4d5156;font-weight:400;">1</div>
<div class="t" style="left:-260.0px;width:600px;text-align:center;top:535.5px;font-size:19.50px;color:#4d5156;font-weight:400;">2</div>
<div class="t" style="left:-260.0px;width:600px;text-align:center;top:573.5px;font-size:19.50px;color:#4d5156;font-weight:400;">3</div>
<div class="t" style="left:-260.0px;width:600px;text-align:center;top:611.4px;font-size:19.50px;color:#4d5156;font-weight:400;">4</div>
<div class="t" style="left:-260.0px;width:600px;text-align:center;top:649.3px;font-size:19.50px;color:#4d5156;font-weight:400;">5</div>
<div class="t" style="left:-260.0px;width:600px;text-align:center;top:687.2px;font-size:19.50px;color:#4d5156;font-weight:400;">6</div>
<div class="t" style="left:-260.0px;width:600px;text-align:center;top:725.2px;font-size:19.50px;color:#4d5156;font-weight:400;">7</div>
<div class="t" style="left:-260.0px;width:600px;text-align:center;top:763.1px;font-size:19.50px;color:#4d5156;font-weight:400;">8</div>
<div class="t" style="left:-260.0px;width:600px;text-align:center;top:801.0px;font-size:19.50px;color:#4d5156;font-weight:400;">9</div>
<div class="t" style="left:-260.0px;width:600px;text-align:center;top:839.0px;font-size:19.50px;color:#4d5156;font-weight:400;">10</div>
<div class="t" style="left:-260.0px;width:600px;text-align:center;top:876.9px;font-size:19.50px;color:#4d5156;font-weight:400;">11</div>
<div class="t" style="left:-260.0px;width:600px;text-align:center;top:914.8px;font-size:19.50px;color:#4d5156;font-weight:400;">12</div>
<div class="t" style="left:-260.0px;width:600px;text-align:center;top:952.8px;font-size:19.50px;color:#4d5156;font-weight:400;">13</div>
<div class="t" style="left:-260.0px;width:600px;text-align:center;top:990.7px;font-size:19.50px;color:#4d5156;font-weight:400;">14</div>
<div class="t" style="left:-260.0px;width:600px;text-align:center;top:1028.6px;font-size:19.50px;color:#4d5156;font-weight:400;">15</div>
<div class="t" style="left:-260.0px;width:600px;text-align:center;top:1066.5px;font-size:19.50px;color:#4d5156;font-weight:400;">16</div>
<div class="t" style="left:-260.0px;width:600px;text-align:center;top:1104.5px;font-size:19.50px;color:#4d5156;font-weight:400;">17</div>
<div class="t" style="left:-260.0px;width:600px;text-align:center;top:1142.4px;font-size:19.50px;color:#4d5156;font-weight:400;">18</div>
<div class="t" style="left:-260.0px;width:600px;text-align:center;top:1180.3px;font-size:19.50px;color:#4d5156;font-weight:400;">19</div>
<div class="t" style="left:-260.0px;width:600px;text-align:center;top:1218.3px;font-size:19.50px;color:#4d5156;font-weight:400;">20</div>
<div class="t" style="left:-260.0px;width:600px;text-align:center;top:1256.2px;font-size:19.50px;color:#4d5156;font-weight:400;">21</div>
<div class="t" style="left:-260.0px;width:600px;text-align:center;top:1294.1px;font-size:19.50px;color:#4d5156;font-weight:400;">22</div>
<div class="t" style="left:-260.0px;width:600px;text-align:center;top:1332.1px;font-size:19.50px;color:#4d5156;font-weight:400;">23</div>
<div class="t" style="left:-260.0px;width:600px;text-align:center;top:1370.0px;font-size:19.50px;color:#4d5156;font-weight:400;">24</div>
<div class="t" style="left:-260.0px;width:600px;text-align:center;top:1407.9px;font-size:19.50px;color:#4d5156;font-weight:400;">25</div>
<div class="t" style="left:-260.0px;width:600px;text-align:center;top:1445.8px;font-size:19.50px;color:#4d5156;font-weight:400;">26</div>
<div class="t" style="left:-260.0px;width:600px;text-align:center;top:1483.8px;font-size:19.50px;color:#4d5156;font-weight:400;">27</div>
<div class="t" style="left:-260.0px;width:600px;text-align:center;top:1521.7px;font-size:19.50px;color:#4d5156;font-weight:400;">28</div>
<div class="t" style="left:-260.0px;width:600px;text-align:center;top:1559.6px;font-size:19.50px;color:#4d5156;font-weight:400;">29</div>
<div class="t" style="left:-260.0px;width:600px;text-align:center;top:1597.6px;font-size:19.50px;color:#4d5156;font-weight:400;">30</div>
<div class="t" style="left:-260.0px;width:600px;text-align:center;top:1635.5px;font-size:19.50px;color:#4d5156;font-weight:400;">31</div>
<div class="t" style="left:89.4px;top:496.7px;font-size:23.46px;color:#000;font-weight:700;">Category</div>
<div class="t" style="left:271.0px;top:496.7px;font-size:23.46px;color:#000;font-weight:700;">Label</div>
<div class="t" style="left:453.0px;top:496.7px;font-size:23.46px;color:#000;font-weight:700;">Value</div>
<div class="t" style="left:89.4px;top:534.6px;font-size:23.50px;color:#000;font-weight:400;">Category 1</div>
<div class="t" style="left:271.0px;top:534.6px;font-size:23.50px;color:#000;font-weight:400;">Series 1</div>
<div class="t" style="left:24.5px;width:600px;text-align:right;top:534.6px;font-size:23.50px;color:#000;font-weight:400;">22</div>
<div class="t" style="left:89.4px;top:572.6px;font-size:23.50px;color:#000;font-weight:400;">Category 1</div>
<div class="t" style="left:271.0px;top:572.6px;font-size:23.50px;color:#000;font-weight:400;">Series 2</div>
<div class="t" style="left:24.5px;width:600px;text-align:right;top:572.6px;font-size:23.50px;color:#000;font-weight:400;">90</div>
<div class="t" style="left:89.4px;top:610.5px;font-size:23.50px;color:#000;font-weight:400;">Category 1</div>
<div class="t" style="left:271.0px;top:610.5px;font-size:23.50px;color:#000;font-weight:400;">Series 3</div>
<div class="t" style="left:24.5px;width:600px;text-align:right;top:610.5px;font-size:23.50px;color:#000;font-weight:400;">61</div>
<div class="t" style="left:89.4px;top:648.4px;font-size:23.50px;color:#000;font-weight:400;">Category 2</div>
<div class="t" style="left:271.0px;top:648.4px;font-size:23.50px;color:#000;font-weight:400;">Series 1</div>
<div class="t" style="left:24.5px;width:600px;text-align:right;top:648.4px;font-size:23.50px;color:#000;font-weight:400;">6</div>
<div class="t" style="left:89.4px;top:686.4px;font-size:23.50px;color:#000;font-weight:400;">Category 2</div>
<div class="t" style="left:271.0px;top:686.4px;font-size:23.50px;color:#000;font-weight:400;">Series 2</div>
<div class="t" style="left:24.5px;width:600px;text-align:right;top:686.4px;font-size:23.50px;color:#000;font-weight:400;">95</div>
<div class="t" style="left:89.4px;top:724.3px;font-size:23.50px;color:#000;font-weight:400;">Category 2</div>
<div class="t" style="left:271.0px;top:724.3px;font-size:23.50px;color:#000;font-weight:400;">Series 3</div>
<div class="t" style="left:24.5px;width:600px;text-align:right;top:724.3px;font-size:23.50px;color:#000;font-weight:400;">28</div>
<div class="t" style="left:89.4px;top:762.2px;font-size:23.50px;color:#000;font-weight:400;">Category 3</div>
<div class="t" style="left:271.0px;top:762.2px;font-size:23.50px;color:#000;font-weight:400;">Series 1</div>
<div class="t" style="left:24.5px;width:600px;text-align:right;top:762.2px;font-size:23.50px;color:#000;font-weight:400;">59</div>
<div class="t" style="left:89.4px;top:800.1px;font-size:23.50px;color:#000;font-weight:400;">Category 3</div>
<div class="t" style="left:271.0px;top:800.1px;font-size:23.50px;color:#000;font-weight:400;">Series 2</div>
<div class="t" style="left:24.5px;width:600px;text-align:right;top:800.1px;font-size:23.50px;color:#000;font-weight:400;">31</div>
<div class="t" style="left:89.4px;top:838.1px;font-size:23.50px;color:#000;font-weight:400;">Category 3</div>
<div class="t" style="left:271.0px;top:838.1px;font-size:23.50px;color:#000;font-weight:400;">Series 3</div>
<div class="t" style="left:24.5px;width:600px;text-align:right;top:838.1px;font-size:23.50px;color:#000;font-weight:400;">32</div>
<div class="r" style="left:82.0px;top:487.6px;width:182.05px;height:37.93px;border:2.5px solid #1a73e8;box-sizing:border-box"></div>
<div class="r" style="left:257.1px;top:518.5px;width:9.0px;height:9.0px;background:#1a73e8;border:1px solid #fff;"></div>
<div class="r" style="left:2134.0px;top:487.6px;width:21.0px;height:1180.4px;background:#fff;"></div>
<div class="r" style="left:2134.0px;top:444.0px;width:1.0px;height:1224.0px;background:#d8d8d8;"></div>
<div class="r" style="left:2137px;top:487px;width:16px;height:48px;border-radius:8px;background:#dadce0"></div>
<div class="r" style="left:0.0px;top:1649.0px;width:2155.0px;height:19.0px;background:#fff;"></div>
<div class="r" style="left:84px;top:1652px;width:862px;height:15px;border-radius:8px;background:#dadce0"></div>
<div class="r" style="left:0.0px;top:1668.0px;width:2246.0px;height:68.0px;background:#f0f2f5;"></div>
<div class="r" style="left:0.0px;top:1668.0px;width:2155.0px;height:2.0px;background:#e1e3e1;"></div>
<svg class="r" style="left:91.0px;top:1695.0px;" width="20" height="20" viewBox="0 0 20 20"><path d="M10 1V19M1 10H19" stroke="#444" stroke-width="3.2"/></svg>
<svg class="r" style="left:144.0px;top:1692.0px;" width="26" height="24" viewBox="0 0 26 24"><path d="M2 3H24M2 9H24M2 15H24M2 21H24" stroke="#444" stroke-width="3.4"/></svg>
<div class="r" style="left:209.0px;top:1671.0px;width:171.0px;height:65.0px;background:#fafbfb;"></div>
<div class="t" style="left:239.0px;top:1690.9px;font-size:26.70px;color:#188038;font-weight:400;">Chart1</div>
<svg class="r" style="left:336.0px;top:1699.5px;" width="14" height="7.0" viewBox="0 0 14 7.0"><path d="M0 0H14L7.0 7.0Z" fill="#188038"/></svg>
<div class="t" style="left:410.0px;top:1690.6px;font-size:27.00px;color:#444;font-weight:400;">Chart2</div>
<svg class="r" style="left:512.0px;top:1699.5px;" width="14" height="7.0" viewBox="0 0 14 7.0"><path d="M0 0H14L7.0 7.0Z" fill="#444"/></svg>
<div class="t" style="left:585.0px;top:1690.6px;font-size:27.00px;color:#444;font-weight:400;">Chart3</div>
<svg class="r" style="left:687.0px;top:1699.5px;" width="14" height="7.0" viewBox="0 0 14 7.0"><path d="M0 0H14L7.0 7.0Z" fill="#444"/></svg>
<div class="r" style="left:2084px;top:1688px;width:32px;height:32px;border-radius:4px;background:#444"></div>
<svg class="r" style="left:2088.0px;top:1690.0px;" width="24" height="40" viewBox="0 0 24 40"><path d="M12 4Q13 11 20 12Q13 13 12 20Q11 13 4 12Q11 11 12 4Z" fill="#fff"/><path d="M8 30L12 36L16 30Z" fill="#444"/></svg>
<svg class="r" style="left:2196.0px;top:1682.0px;" width="20" height="24" viewBox="0 0 20 24"><path d="M5 3L14 12L5 21" stroke="#444" stroke-width="3" fill="none"/></svg>
<div class="r" style="left:2155.0px;top:320.0px;width:91.0px;height:1348.0px;background:#fff;"></div>
<div class="r" style="left:2155.0px;top:320.0px;width:2.0px;height:1348.0px;background:#e1e3e1;"></div>
<svg class="r" style="left:2189.0px;top:363.0px;" width="36" height="36" viewBox="0 0 36 36"><rect x="2" y="2" width="32" height="32" rx="3" fill="#4285f4"/><rect x="8" y="8" width="20" height="20" fill="#fff"/><rect x="2" y="28" width="26" height="6" fill="#34a853"/><rect x="28" y="8" width="6" height="20" fill="#fbbc04"/><path d="M28 28H34L28 34Z" fill="#ea4335"/><text x="18" y="25" font-size="13" text-anchor="middle" fill="#4285f4" font-family="Liberation Sans">31</text></svg>
<svg class="r" style="left:2189.0px;top:464.0px;" width="36" height="36" viewBox="0 0 36 36"><rect x="1" y="1" width="34" height="34" rx="3" fill="#fbbc04"/><circle cx="18" cy="15" r="7" fill="#fff"/><rect x="14" y="22" width="8" height="5" fill="#fff"/></svg>
<svg class="r" style="left:2190.0px;top:566.0px;" width="34" height="34" viewBox="0 0 34 34"><circle cx="16" cy="18" r="12" stroke="#1a73e8" stroke-width="5" fill="none"/><path d="M10 17L15 22L26 9" stroke="#1a73e8" stroke-width="4.5" fill="none"/></svg>
<svg class="r" style="left:2190.0px;top:666.0px;" width="34" height="36" viewBox="0 0 34 36"><circle cx="17" cy="18" r="16" fill="#1a73e8"/><circle cx="17" cy="13" r="5" fill="#fff"/><path d="M8 26C10 20 24 20 26 26Z" fill="#fff"/></svg>
<svg class="r" style="left:2195.0px;top:768.0px;" width="24" height="34" viewBox="0 0 24 34"><path d="M12 33C6 24 2 19 2 12A10 10 0 0 1 22 12C22 19 18 24 12 33Z" fill="#34a853"/><path d="M2 12A10 10 0 0 1 12 2V12Z" fill="#ea4335"/><path d="M12 2A10 10 0 0 1 22 12H12Z" fill="#4285f4"/><circle cx="12" cy="12" r="4" fill="#fff"/></svg>
<div class="r" style="left:2187.0px;top:863.0px;width:38.0px;height:2.0px;background:#dadce0;"></div>
<svg class="r" style="left:2193.0px;top:932.0px;" width="28" height="28" viewBox="0 0 28 28"><path d="M14 2V26M2 14H26" stroke="#444" stroke-width="2.6"/></svg>
</div></div>
<div class="r" style="left:0;top:213px;width:2246px;height:1523px;background:rgba(0,0,3,0.62)"></div>
<div class="r" style="left:0;top:1726px;width:10px;height:10px;background:radial-gradient(circle at 100% 0, transparent 9px, #000 10px)"></div>
<div class="r" style="left:0.0px;top:1734.0px;width:2246.0px;height:2.0px;background:#1a1a22;"></div>
<div class="r" style="left:633px;top:494px;width:990px;height:966px;background:#fff;border-radius:16px;box-shadow:0 2px 6px rgba(0,0,0,0.15)"></div>
<div class="t" style="left:675.5px;top:546.3px;font-size:39.80px;color:#202124;font-weight:400;">Publish to the web</div>
<svg class="r" style="left:1536.0px;top:549.2px;" width="25" height="25" viewBox="0 0 25 25"><path d="M2 2L23 23M23 2L2 23" stroke="#5f6368" stroke-width="3" stroke-linecap="butt"/></svg>
<div class="t" style="left:678.0px;top:625.2px;font-size:19.80px;color:#1a73e8;font-weight:400;">This document is published to the web.</div>
<div class="t" style="left:678.0px;top:671.3px;font-size:25.10px;color:#3c4043;font-weight:400;">Make your content visible to anyone by publishing it to the web. You can link to</div>
<div class="t" style="left:678.0px;top:706.3px;font-size:25.10px;color:#3c4043;font-weight:400;">or embed your document. <span style="color:#1a55c4">Learn more</span></div>
<div class="t" style="left:500.0px;width:600px;text-align:center;top:798.0px;font-size:25.40px;color:#202124;font-weight:700;">Link</div>
<div class="t" style="left:772.0px;width:600px;text-align:center;top:797.7px;font-size:25.80px;color:#5f6368;font-weight:700;">Embed</div>
<div class="r" style="left:678.0px;top:838.5px;width:900.0px;height:2.0px;background:#dadce0;"></div>
<div class="r" style="left:678.0px;top:836.5px;width:244.0px;height:4.0px;background:#1a73e8;"></div>
<div class="r" style="left:678px;top:876px;width:135px;height:67px;border:1.5px solid #dadce0;border-radius:4px;box-sizing:border-box"></div>
<div class="t" style="left:698.0px;top:897.6px;font-size:24.60px;color:#202124;font-weight:400;">Chart1</div>
<svg class="r" style="left:786.0px;top:905.5px;" width="14" height="7.0" viewBox="0 0 14 7.0"><path d="M0 0H14L7.0 7.0Z" fill="#5f6368"/></svg>
<div class="r" style="left:846px;top:876px;width:413px;height:67px;border:1.5px solid #dadce0;border-radius:4px;box-sizing:border-box"></div>
<div class="t" style="left:863.0px;top:897.3px;font-size:24.90px;color:#202124;font-weight:400;">Comma-separated values (.csv)</div>
<svg class="r" style="left:1227.0px;top:905.5px;" width="14" height="7.0" viewBox="0 0 14 7.0"><path d="M0 0H14L7.0 7.0Z" fill="#5f6368"/></svg>
<div class="r" style="left:678px;top:959.5px;width:899.5px;height:63px;border:3px solid #1a73e8;border-radius:7px;box-sizing:border-box"></div>
<div class="r" style="left:695.0px;top:977.0px;width:866.0px;height:28.0px;background:#b3d4fc;"></div>
<div class="t" style="left:694.7px;top:979.9px;font-size:24.95px;color:#202124;font-weight:400;">.gNQlFxiG_DK0LmHV6Z83wvM3efMNmg/pub?gid=0&amp;single=true&amp;output=csv</div>
<div class="t" style="left:678.0px;top:1081.0px;font-size:24.80px;color:#3c4043;font-weight:400;">Or share this link using:</div>
<svg class="r" style="left:952.0px;top:1076.0px;" width="54" height="40" viewBox="0 0 54 40"><path d="M4 3L27 21L50 3V37H4Z" fill="#e3e3e3"/><path d="M4 37V4L27 21L50 4V37" stroke="#d93025" stroke-width="7" fill="none" stroke-linejoin="miter" stroke-miterlimit="2"/></svg>
<svg class="r" style="left:1030.0px;top:1069.0px;" width="53" height="52" viewBox="0 0 53 52"><rect x="0" y="0" width="53" height="52" rx="6" fill="#3b5998"/><path d="M26.8 52V17A8 8 0 0 1 34.8 9H43V16H37A3 3 0 0 0 34.2 19V52Z" fill="#fff"/><rect x="19.5" y="24.7" width="23.5" height="7.3" fill="#fff"/></svg>
<svg class="r" style="left:1106.0px;top:1071.0px;" width="58" height="48" viewBox="0 0 58 48"><path d="M56 6C54 7 52 8 50 8C52 7 54 4 55 2C53 3 51 4 48 5C46 3 43 2 40 2C34 2 29 7 29 13C29 14 29 15 29 16C20 15 12 11 6 4C5 6 4 8 4 11C4 15 6 18 9 20C7 20 6 19 4 18C4 23 8 28 13 29C12 29 11 29 10 29C9 29 8 29 8 29C9 33 13 37 18 37C14 40 9 42 4 42C3 42 2 42 1 42C6 45 12 46 18 46C40 46 51 28 51 13C51 12 51 12 51 11C53 10 55 8 56 6Z" fill="#1da1f2"/></svg>
<div class="t" style="left:678.0px;top:1151.3px;font-size:19.70px;color:#80868b;font-weight:400;"><b style="color:#3c4043">Note:</b> Viewers may be able to access the underlying data for published charts. <span style="color:#1a55c4">Learn more</span></div>
<div class="r" style="left:678px;top:1215px;width:207px;height:64px;border-radius:4px;background:#f1f3f4"></div>
<div class="t" style="left:723.7px;top:1235.2px;font-size:24.20px;color:#a8abaf;font-weight:700;">Published</div>
<div class="r" style="left:678.0px;top:1329.0px;width:900.0px;height:2.0px;background:#e8eaed;"></div>
<svg class="r" style="left:690.0px;top:1390.0px;" width="12" height="16" viewBox="0 0 12 16"><path d="M2 2L10 8L2 14Z" fill="#5f6368"/></svg>
<div class="t" style="left:715.7px;top:1383.6px;font-size:25.30px;color:#202124;font-weight:400;">Published content &amp; settings</div>
<svg class="r" style="left:1453.0px;top:326.0px;" width="32" height="42" viewBox="0 0 32 42"><g transform="translate(0.5,1.4) scale(0.87)"><path d="M4 3V35L12 27L18 41L24 38L18 25H29Z" fill="#000" stroke="#fff" stroke-width="3.2" stroke-linejoin="round"/></g></svg>
</body></html>
